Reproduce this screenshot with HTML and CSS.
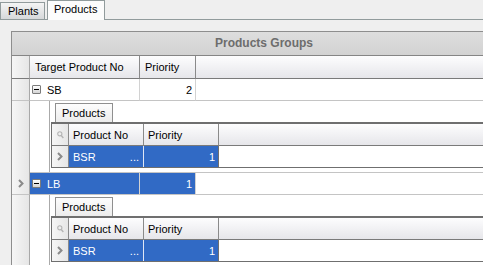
FILE: index.html
```html
<!DOCTYPE html>
<html>
<head>
<meta charset="utf-8">
<link rel="stylesheet" href="styles.css">
</head>
<body>
<div class="tabs">
  <div class="tab">Plants</div>
  <div class="tab active">Products</div>
</div>
<div class="page">
  <div class="panel">
    <div class="band">Products Groups</div>
    <div class="grid">
      <div class="row head">
        <div class="ind"></div>
        <div class="c1 cell">Target Product No</div>
        <div class="c2 cell">Priority</div>
        <div class="fill cell"></div>
      </div>
      <div class="row data">
        <div class="ind"></div>
        <div class="c1 cell"><span class="exp"></span>SB</div>
        <div class="c2 cell num">2</div>
        <div class="fill cell"></div>
      </div>
      <div class="row detail-row">
        <div class="ind"></div>
        <div class="detail">
          <div class="detail-inner">
            <div class="subtab">Products</div>
            <div class="sub">
              <div class="srow shead">
                <div class="sind"><svg width="7" height="8" viewBox="0 0 7 8"><circle cx="2.8" cy="2.8" r="2.1" fill="none" stroke="#b4b4b4" stroke-width="1.1"/><path d="M4.3 4.5 L6.3 7" stroke="#b4b4b4" stroke-width="1.4"/></svg></div>
                <div class="s1 scell">Product No</div>
                <div class="s2 scell">Priority</div>
                <div class="sfill scell"></div>
              </div>
              <div class="srow sdata">
                <div class="sind"><svg width="6" height="9" viewBox="0 0 6 9"><path d="M1 1 L4.5 4.5 L1 8" fill="none" stroke="#8a8a8a" stroke-width="2"/></svg></div>
                <div class="s1 scell sel">BSR<span class="dots">...</span></div>
                <div class="s2 scell sel num">1</div>
                <div class="sfill scell"></div>
              </div>
            </div>
          </div>
        </div>
      </div>
      <div class="row data">
        <div class="ind"><svg width="6" height="9" viewBox="0 0 6 9"><path d="M1 1 L4.5 4.5 L1 8" fill="none" stroke="#8a8a8a" stroke-width="2"/></svg></div>
        <div class="c1 cell sel"><span class="exp"></span>LB</div>
        <div class="c2 cell sel num">1</div>
        <div class="fill cell"></div>
      </div>
      <div class="row detail-row">
        <div class="ind"></div>
        <div class="detail">
          <div class="detail-inner">
            <div class="subtab">Products</div>
            <div class="sub">
              <div class="srow shead">
                <div class="sind"><svg width="7" height="8" viewBox="0 0 7 8"><circle cx="2.8" cy="2.8" r="2.1" fill="none" stroke="#b4b4b4" stroke-width="1.1"/><path d="M4.3 4.5 L6.3 7" stroke="#b4b4b4" stroke-width="1.4"/></svg></div>
                <div class="s1 scell">Product No</div>
                <div class="s2 scell">Priority</div>
                <div class="sfill scell"></div>
              </div>
              <div class="srow sdata">
                <div class="sind"><svg width="6" height="9" viewBox="0 0 6 9"><path d="M1 1 L4.5 4.5 L1 8" fill="none" stroke="#8a8a8a" stroke-width="2"/></svg></div>
                <div class="s1 scell sel">BSR<span class="dots">...</span></div>
                <div class="s2 scell sel num">1</div>
                <div class="sfill scell"></div>
              </div>
            </div>
          </div>
        </div>
      </div>
    </div>
  </div>
</div>
</body>
</html>
```

FILE: styles.css
```css
* { box-sizing: border-box; }
html, body { margin: 0; padding: 0; }
body {
  width: 483px;
  height: 265px;
  overflow: hidden;
  background: #efefef;
  font-family: "Liberation Sans", Arial, sans-serif;
  font-size: 11px;
  color: #000;
}
.tabs {
  display: flex;
  align-items: flex-end;
  gap: 2px;
  height: 20px;
  border-bottom: 1px solid #919b9c;
}
.tab {
  height: 17px;
  width: 45px;
  padding-left: 7px;
  line-height: 16px;
  border: 1px solid #919b9c;
  border-bottom: none;
  background: linear-gradient(#f4f4f4, #d6d8da);
}
.tab.active {
  width: 58px;
  height: 20px;
  margin-bottom: -1px;
  padding-left: 6px;
  line-height: 17px;
  background: #fcfcfc;
}
.page {
  padding: 11px 0 0 11px;
}
.panel {
  border-top: 1px solid #8e8e8e;
  border-left: 1px solid #8e8e8e;
  background: #fff;
}
.band {
  height: 24px;
  line-height: 23px;
  padding-left: 33px;
  text-align: center;
  font-weight: bold;
  font-size: 12px;
  color: #6d6d6d;
  background: linear-gradient(#dedede, #d2d2d2);
  border-bottom: 1px solid #858585;
}
.row {
  display: flex;
}
.ind {
  width: 18px;
  flex: none;
  border-right: 1px solid #a8a8a8;
  background: linear-gradient(to right, #f6f6f6, #e6e6e6);
  display: flex;
  align-items: center;
  justify-content: center;
}
.cell {
  flex: none;
  padding-left: 5px;
  white-space: nowrap;
  display: flex;
  align-items: center;
}
.c1 { width: 110px; }
.c2 { width: 56px; }
.fill { flex: 1; }
.head {
  height: 23px;
}
.head .ind { border-bottom: 1px solid #7a7a7a; }
.head .cell {
  background: linear-gradient(#fdfdfe, #e6e6ea);
  border-right: 1px solid #8a8a8a;
  border-bottom: 1px solid #7a7a7a;
}
.head .fill { border-right: none; }
.data {
  height: 22px;
}
.data .ind { border-bottom: 1px solid #c4c4c4; }
.data .cell {
  border-right: 1px solid #d2d2d2;
  border-bottom: 1px solid #c4c4c4;
}
.data .fill { border-right: none; }
.num {
  justify-content: flex-end;
  padding-right: 3px;
}
.sel {
  background: #316ac5;
  color: #fff;
}
.exp {
  width: 9px;
  height: 9px;
  margin: 0 6px 0 -3px;
  border: 1px solid #7b7b7b;
  border-radius: 1px;
  background: linear-gradient(#ffffff, #d4d4d4);
  position: relative;
}
.exp::after {
  content: "";
  position: absolute;
  left: 1px;
  top: 3px;
  width: 5px;
  height: 1px;
  background: #000;
}
.detail-row {
  height: 72px;
}
.detail {
  flex: 1;
  min-width: 0;
  padding-left: 19px;
  border-bottom: 1px solid #c4c4c4;
}
.detail-inner {
  height: 100%;
  border-left: 1px solid #aaaaaa;
  padding: 2px 0 0 1px;
}
.subtab {
  width: 58px;
  height: 19px;
  margin-left: 4px;
  padding-left: 6px;
  line-height: 18px;
  border: 1px solid #8f8f8f;
  border-bottom: none;
  background: linear-gradient(#fdfdfd, #ececec);
}
.sub {
  border-top: 2px solid #6f6f6f;
  border-left: 1px solid #6f6f6f;
  border-bottom: 1px solid #6f6f6f;
}
.srow {
  display: flex;
}
.shead { height: 22px; }
.sdata { height: 21px; }
.sind {
  width: 17px;
  flex: none;
  border-right: 1px solid #8a8a8a;
  background: linear-gradient(to right, #f6f6f6, #e6e6e6);
  display: flex;
  align-items: center;
  justify-content: center;
}
.shead .sind { border-bottom: 1px solid #7a7a7a; }
.scell {
  flex: none;
  padding-left: 4px;
  display: flex;
  align-items: center;
  white-space: nowrap;
}
.s1 { width: 75px; }
.s2 { width: 75px; }
.sfill { flex: 1; min-width: 0; }
.shead .scell {
  background: linear-gradient(#fdfdfe, #e6e6ea);
  border-right: 1px solid #8a8a8a;
  border-bottom: 1px solid #7a7a7a;
}
.shead .sfill { border-right: none; }
.sdata .scell {
  border-right: 1px solid #dfe6f5;
}
.sdata .sfill { border-right: none; }
.sdata .s2 { border-right: 1px solid #6f6f6f; }
.dots {
  margin-left: auto;
  padding-right: 4px;
}
```
